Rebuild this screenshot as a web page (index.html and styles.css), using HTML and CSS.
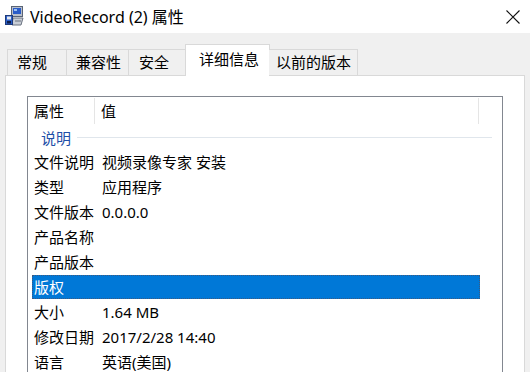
FILE: index.html
```html
<!DOCTYPE html>
<html>
<head>
  <meta name="viewport" content="width=device-width, initial-scale=1.0">
  <link rel="stylesheet" href="styles.css">
</head>
<body>
  <div class="titlebar">
    <svg class="app-icon" width="20" height="20" viewBox="0 0 20 20">
      <rect x="7.5" y="0.5" width="11" height="10" fill="#b8bfcb" stroke="#5a6475" stroke-width="1"/>
      <rect x="9" y="2" width="8" height="6" fill="#2a5cc8"/>
      <rect x="10" y="3" width="3" height="2" fill="#9cc0f0"/>
      <path d="M9 12 L19 12 L17 19 L8 19 Z" fill="#c9ced6" stroke="#6b7280" stroke-width="1"/>
      <path d="M11 15 L17 15" stroke="#6b7280" stroke-width="1"/>
      <rect x="1.5" y="9.5" width="7" height="9" fill="#2b5fc9" stroke="#1e3a7a" stroke-width="1"/>
      <rect x="3" y="10.5" width="4" height="3" fill="#e4e8ef"/>
      <rect x="3" y="15" width="4" height="2.5" fill="#0f1f4a"/>
    </svg>
    <div class="title">VideoRecord (2) 属性</div>
    <div class="close">
      <svg width="16" height="16" viewBox="0 0 16 16">
        <path d="M1.5 1.5 L14.5 14.5 M14.5 1.5 L1.5 14.5" stroke="#111" stroke-width="1.1" fill="none"/>
      </svg>
    </div>
  </div>

  <div class="dialog">
    <div class="tabs">
      <div class="tab tab-general">常规</div>
      <div class="tab tab-compat">兼容性</div>
      <div class="tab tab-security">安全</div>
      <div class="tab tab-details active">详细信息</div>
      <div class="tab tab-versions">以前的版本</div>
    </div>
    <div class="panel">
      <div class="listview">
        <div class="lv-header">
          <div class="lv-col lv-col-name">属性</div>
          <div class="lv-col lv-col-value">值</div>
        </div>
        <div class="lv-group">
          <span class="lv-group-label">说明</span>
          <span class="lv-group-line"></span>
        </div>
        <div class="lv-row"><span>文件说明</span><span>视频录像专家 安装</span></div>
        <div class="lv-row"><span>类型</span><span>应用程序</span></div>
        <div class="lv-row"><span>文件版本</span><span>0.0.0.0</span></div>
        <div class="lv-row"><span>产品名称</span><span></span></div>
        <div class="lv-row"><span>产品版本</span><span></span></div>
        <div class="lv-row selected"><span>版权</span><span></span></div>
        <div class="lv-row"><span>大小</span><span>1.64 MB</span></div>
        <div class="lv-row"><span>修改日期</span><span>2017/2/28 14:40</span></div>
        <div class="lv-row"><span>语言</span><span>英语(美国)</span></div>
      </div>
    </div>
  </div>
</body>
</html>
```

FILE: styles.css
```css
* {
  margin: 0;
  padding: 0;
  box-sizing: border-box;
}

body {
  width: 530px;
  height: 372px;
  overflow: hidden;
  background: #f0f0f0;
  font-family: "Noto Sans", "Noto Sans CJK SC", sans-serif;
  font-size: 15px;
  color: #000;
}

/* Title bar */
.titlebar {
  height: 33px;
  background: #fff;
  display: flex;
  align-items: center;
}

.app-icon {
  margin-left: 4px;
  margin-top: -1px;
}

.title {
  margin-left: 6px;
  font-size: 16px;
  line-height: 20px;
  color: #000;
}

.close {
  margin-left: auto;
  width: 46px;
  height: 33px;
  display: flex;
  align-items: center;
  justify-content: center;
  margin-right: -6px;
}

/* Tabs */
.dialog {
  padding: 11px 5px 0 5px;
}

.tabs {
  display: flex;
  align-items: flex-end;
  padding-left: 2px;
  height: 31px;
  position: relative;
  z-index: 1;
}

.tab {
  height: 26px;
  padding-left: 9px;
  border: 1px solid #d9d9d9;
  border-bottom: none;
  border-left: none;
  background: #f0f0f0;
  line-height: 25px;
  white-space: nowrap;
}

.tab-general {
  width: 60px;
  border-left: 1px solid #d9d9d9;
}

.tab-compat {
  width: 62px;
}

.tab-security {
  width: 58px;
  padding-left: 10px;
}

.tab-versions {
  width: 89px;
  padding-left: 7px;
}

.tab.active {
  width: 85px;
  height: 32px;
  background: #fff;
  margin: 0 -1px -1px -2px;
  padding-left: 13px;
  border-left: 1px solid #d9d9d9;
  border-right: 1px solid #d9d9d9;
  line-height: 29px;
}

.panel {
  background: #fff;
  border: 1px solid #d9d9d9;
  border-bottom: none;
  height: 298px;
  padding: 20px 0 0 21px;
}

/* List view */
.listview {
  width: 476px;
  height: 277px;
  border: 1px solid #828790;
  border-bottom: none;
  padding: 1px 0 0 0;
  overflow: hidden;
}

.lv-header {
  display: flex;
  height: 27px;
}

.lv-col {
  height: 26px;
  line-height: 27px;
  padding-left: 6px;
}

.lv-col-name {
  width: 67px;
  border-right: 1px solid #e5e5e5;
}

.lv-col-value {
  width: 384px;
  border-right: 1px solid #e5e5e5;
}

.lv-group {
  display: flex;
  align-items: center;
  height: 25px;
  padding-left: 13px;
}

.lv-group-label {
  color: #1e4fa8;
  line-height: 22px;
}

.lv-group-line {
  flex: 1;
  height: 1px;
  background: #e0e6ec;
  margin: 0 10px 0 6px;
}

.lv-row {
  display: grid;
  grid-template-columns: 68px 1fr;
  height: 25px;
  line-height: 24px;
  margin-left: 4px;
  width: 448px;
  padding-left: 2px;
  white-space: nowrap;
}

.lv-row.selected {
  background: #0078d7;
  color: #fff;
  outline: 1px dotted #3d5a80;
  outline-offset: -1px;
  height: 24px;
  margin-bottom: 1px;
}
```
